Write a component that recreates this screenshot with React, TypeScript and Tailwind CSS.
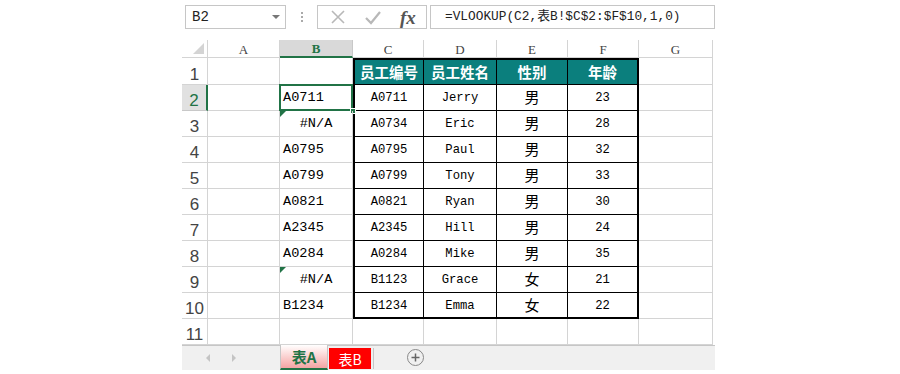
import React from "react";

const cols = ["A", "B", "C", "D", "E", "F", "G"];

const rows = [
    { b: "A0711", c: "A0711", d: "Jerry", e: "男", f: "23" },
    { b: "#N/A", c: "A0734", d: "Eric", e: "男", f: "28" },
    { b: "A0795", c: "A0795", d: "Paul", e: "男", f: "32" },
    { b: "A0799", c: "A0799", d: "Tony", e: "男", f: "33" },
    { b: "A0821", c: "A0821", d: "Ryan", e: "男", f: "30" },
    { b: "A2345", c: "A2345", d: "Hill", e: "男", f: "24" },
    { b: "A0284", c: "A0284", d: "Mike", e: "男", f: "35" },
    { b: "#N/A", c: "B1123", d: "Grace", e: "女", f: "21" },
    { b: "B1234", c: "B1234", d: "Emma", e: "女", f: "22" },
];

const mono = "font-['Liberation_Mono','Noto_Sans_CJK_SC',monospace]";
const cjk = "font-['Noto_Sans_CJK_SC',sans-serif]";
const grid = "border-r border-b border-[#d4d4d4]";

const RowNum = ({ n, active }: { n: number; active?: boolean }) => (
    <div
        className={`flex items-end justify-center pb-[1px] text-[17px] leading-none font-['Liberation_Sans_Narrow','Liberation_Sans',sans-serif] ${
            active
                ? "bg-[#e1e1e1] text-[#217346] border-b border-[#c8c8c8] border-r-2 border-r-[#217346]"
                : "text-[#444] " + grid
        }`}
    >
        {n}
    </div>
);

const ErrorMark = () => (
    <div className="absolute left-0 top-0 w-0 h-0 border-t-[6px] border-r-[6px] border-t-[#217346] border-r-transparent" />
);

function FormulaBar() {
    return (
        <div className="h-[40px] flex items-start pt-[5px] pl-[3px]">
            <div className="w-[101px] h-[24px] border border-[#c6c6c6] flex items-center justify-between pl-[6px] pr-[5px]">
                <span className={`${mono} text-[14px] text-[#222]`}>B2</span>
                <span className="w-0 h-0 border-l-[4px] border-r-[4px] border-t-[4px] border-l-transparent border-r-transparent border-t-[#777]" />
            </div>
            <div className="w-[31px] h-[24px] flex flex-col items-center justify-center gap-[2px]">
                <span className="w-[2px] h-[2px] bg-[#aaa]" />
                <span className="w-[2px] h-[2px] bg-[#aaa]" />
                <span className="w-[2px] h-[2px] bg-[#aaa]" />
            </div>
            <div className="w-[110px] h-[24px] border border-[#c6c6c6] flex items-center pl-[12px] gap-[18px]">
                <svg width="16" height="16" viewBox="0 0 16 16">
                    <path d="M2 2 L14 14 M14 2 L2 14" stroke="#b8b8b8" strokeWidth="1.6" fill="none" />
                </svg>
                <svg width="18" height="16" viewBox="0 0 18 16">
                    <path d="M2 9 L7 14 L16 3" stroke="#b8b8b8" strokeWidth="2.2" fill="none" />
                </svg>
                <span className="font-['Liberation_Serif',serif] italic font-bold text-[19px] leading-none text-[#555]">
                    fx
                </span>
            </div>
            <div className="ml-[3px] w-[285px] h-[24px] border border-[#c6c6c6] flex items-center pl-[14px]">
                <span className={`${mono} text-[12.8px] text-[#222] whitespace-nowrap`}>
                    =VLOOKUP(C2,表B!$C$2:$F$10,1,0)
                </span>
            </div>
        </div>
    );
}

function Sheet() {
    return (
        <div className="grid grid-cols-[26px_72px_73px_71px_73px_71px_71px_74px] grid-rows-[18px_27px_repeat(10,26px)]">
            {/* corner */}
            <div className={`flex items-end justify-end pr-[3px] pb-[3px] ${grid}`}>
                <svg width="11" height="11" viewBox="0 0 11 11">
                    <path d="M11 0 L11 11 L0 11 Z" fill="#d4d4d4" />
                </svg>
            </div>
            {cols.map((c) => (
                <div
                    key={c}
                    className={`flex items-end justify-center pb-[1px] text-[13px] leading-none font-['Liberation_Serif',serif] ${
                        c === "B"
                            ? "bg-[#d9d9d9] text-[#217346] font-bold border-r border-[#c8c8c8] border-b-2 border-b-[#217346]"
                            : "text-[#444] " + grid
                    }`}
                >
                    {c}
                </div>
            ))}

            {/* row 1 */}
            <RowNum n={1} />
            <div className={grid} />
            <div className={grid} />
            {["员工编号", "员工姓名", "性别", "年龄"].map((h, i) => (
                <div
                    key={h}
                    className={`bg-[#0b7f7d] text-white font-bold text-[14.5px] ${cjk} flex items-center justify-center border-t-2 border-r border-b border-black ${
                        i === 0 ? "border-l-2" : ""
                    } ${i === 3 ? "border-r-2" : ""}`}
                >
                    {h}
                </div>
            ))}
            <div className={grid} />

            {rows.map((r, idx) => {
                const n = idx + 2;
                const last = idx === rows.length - 1;
                const tcell = `flex items-center justify-center border-r border-b border-black ${last ? "border-b-2" : ""}`;
                return (
                    <React.Fragment key={n}>
                        <RowNum n={n} active={n === 2} />
                        <div className={grid} />
                        <div
                            className={`relative flex items-center pt-[2px] ${mono} text-[13.6px] text-black ${grid} ${
                                r.b === "#N/A" ? "justify-center" : "pl-[3px]"
                            }`}
                        >
                            {r.b === "#N/A" && <ErrorMark />}
                            {r.b}
                            {n === 2 && (
                                <>
                                    <div className="absolute -left-[1px] -top-[1px] -right-[1px] -bottom-[1px] border-2 border-[#217346]" />
                                    <div className="absolute -right-[4px] -bottom-[4px] w-[6px] h-[6px] bg-[#217346] border border-white" />
                                </>
                            )}
                        </div>
                        <div className={`${tcell} border-l-2 ${mono} text-[12.2px] pt-[2px]`}>{r.c}</div>
                        <div className={`${tcell} ${mono} text-[12.2px] pt-[2px]`}>{r.d}</div>
                        <div className={`${tcell} ${cjk} text-[15px]`}>{r.e}</div>
                        <div className={`${tcell} border-r-2 ${mono} text-[12.2px] pt-[2px]`}>{r.f}</div>
                        <div className={grid} />
                    </React.Fragment>
                );
            })}

            {/* row 11 */}
            <RowNum n={11} />
            {cols.map((c) => (
                <div key={c} className={grid} />
            ))}
        </div>
    );
}

function TabBar() {
    return (
        <div className="h-[25px] w-[533px] bg-[#f0f0f0] border-t border-[#c6c6c6] flex items-start">
            <div className="w-[98px] h-[24px] flex items-center pl-[24px] gap-[22px]">
                <span className="w-0 h-0 border-t-[4px] border-b-[4px] border-r-[4px] border-t-transparent border-b-transparent border-r-[#c4c4c4]" />
                <span className="w-0 h-0 border-t-[4px] border-b-[4px] border-l-[4px] border-t-transparent border-b-transparent border-l-[#c4c4c4]" />
            </div>
            <div className="w-[48px] h-[25px] -mt-[1px] bg-linear-to-b from-white to-[#f2a4a4] border-x border-[#c6c6c6] border-b-2 border-b-[#217346] flex items-center justify-center">
                <span className={`${cjk} font-bold text-[15px] text-[#217346] leading-none`}>表A</span>
            </div>
            <div className="ml-[1px] mt-[2px] w-[42px] h-[21px] bg-[#ff0000] flex items-center justify-center">
                <span className={`${cjk} text-[14px] text-white leading-none`}>表B</span>
            </div>
            <div className="ml-[2px] mt-[2px] w-[1px] h-[21px] bg-[#c6c6c6]" />
            <div className="ml-[33px] mt-[3px] w-[17px] h-[17px] rounded-full border border-[#888] flex items-center justify-center">
                <svg width="9" height="9" viewBox="0 0 9 9">
                    <path d="M4.5 0.5 V8.5 M0.5 4.5 H8.5" stroke="#666" strokeWidth="1.5" />
                </svg>
            </div>
        </div>
    );
}

export default function App() {
    return (
        <div className="w-[900px] h-[374px] bg-white overflow-hidden">
            <div className="ml-[182px] w-[533px] flex flex-col">
                <FormulaBar />
                <Sheet />
                <TabBar />
            </div>
        </div>
    );
}
